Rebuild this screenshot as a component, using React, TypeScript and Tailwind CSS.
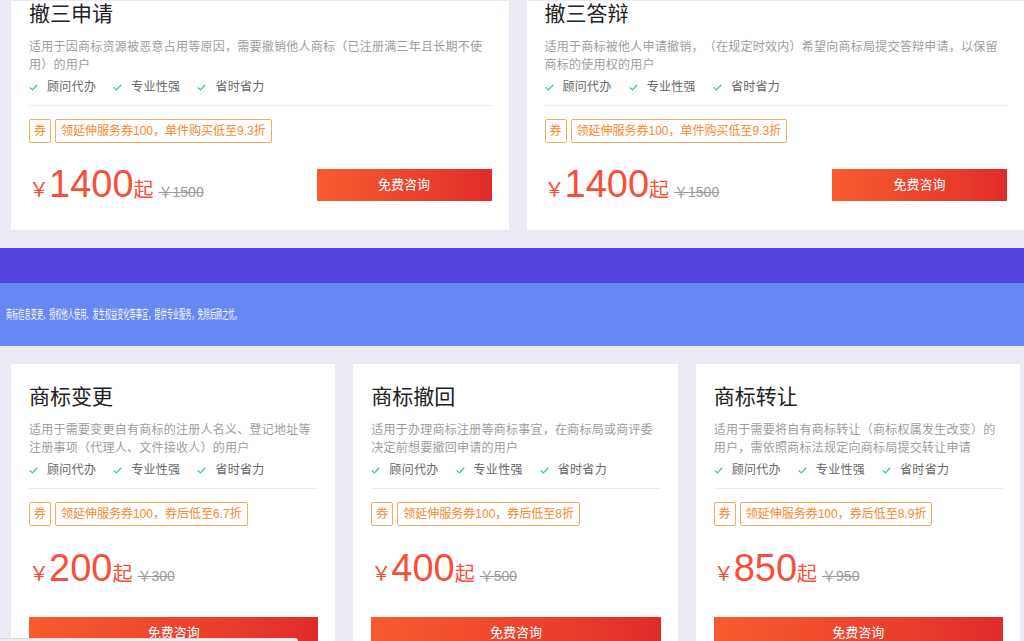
import React from "react";

type Plan = {
    title: string;
    desc: string;
    coupon: string;
    price: string;
    old: string;
};

const features = ["顾问代办", "专业性强", "省时省力"];

const topPlans: Plan[] = [
    {
        title: "撤三申请",
        desc: "适用于因商标资源被恶意占用等原因，需要撤销他人商标（已注册满三年且长期不使用）的用户",
        coupon: "领延伸服务券100，单件购买低至9.3折",
        price: "1400",
        old: "1500",
    },
    {
        title: "撤三答辩",
        desc: "适用于商标被他人申请撤销，（在规定时效内）希望向商标局提交答辩申请，以保留商标的使用权的用户",
        coupon: "领延伸服务券100，单件购买低至9.3折",
        price: "1400",
        old: "1500",
    },
];

const bottomPlans: Plan[] = [
    {
        title: "商标变更",
        desc: "适用于需要变更自有商标的注册人名义、登记地址等注册事项（代理人、文件接收人）的用户",
        coupon: "领延伸服务券100，券后低至6.7折",
        price: "200",
        old: "300",
    },
    {
        title: "商标撤回",
        desc: "适用于办理商标注册等商标事宜，在商标局或商评委决定前想要撤回申请的用户",
        coupon: "领延伸服务券100，券后低至8折",
        price: "400",
        old: "500",
    },
    {
        title: "商标转让",
        desc: "适用于需要将自有商标转让（商标权属发生改变）的用户，需依照商标法规定向商标局提交转让申请",
        coupon: "领延伸服务券100，券后低至8.9折",
        price: "850",
        old: "950",
    },
];

const Check = () => (
    <svg width="9" height="7" viewBox="0 0 9 7" fill="none">
        <path d="M0.8 3.4 L3.4 5.9 L8.2 0.8" stroke="#3ec78b" strokeWidth="1.3" />
    </svg>
);

const CardHead = ({ plan }: { plan: Plan }) => (
    <>
        <h3 className="text-[21px] leading-[26px] text-[#222]">{plan.title}</h3>
        <p className="mt-[11px] text-[12px] leading-[18px] tracking-[0.25px] text-[#9d9d9d]">{plan.desc}</p>
        <div className="mt-[4px] flex h-[18px] items-center gap-[17px] text-[12px] tracking-[0.3px] text-[#666]">
            {features.map((f) => (
                <span key={f} className="flex items-center gap-[9px]">
                    <Check />
                    {f}
                </span>
            ))}
        </div>
        <div className="mt-[9px] h-px bg-[#ececec]" />
        <div className="mt-[13px] flex gap-[4px] text-[12px] leading-[22px] text-[#f7882d]">
            <span className="rounded-[2px] border border-[#f9a95e] px-[4px]">券</span>
            <span className="rounded-[2px] border border-[#f9a95e] px-[5px]">{plan.coupon}</span>
        </div>
    </>
);

const Price = ({ plan }: { plan: Plan }) => (
    <div className="flex items-baseline text-[#f6503a]">
        <span className="text-[20px]">￥</span>
        <span className="text-[38px] leading-[38px]">{plan.price}</span>
        <span className="text-[20px]">起</span>
        <span className="ml-[5px] text-[14px] text-[#999] line-through">￥{plan.old}</span>
    </div>
);

const Button = ({ className }: { className: string }) => (
    <button className={"h-[32px] bg-gradient-to-r from-[#f85b2f] to-[#e02b2a] text-[13px] text-white " + className}>
        免费咨询
    </button>
);

export default function App() {
    return (
        <div className="relative h-[641px] w-[1024px] overflow-hidden bg-[#ebebf6] font-['Liberation_Sans','Noto_Sans_CJK_SC',sans-serif] [text-spacing-trim:space-all]">
            <div className="flex gap-[18px] pl-[11px] pt-[1px]">
                {topPlans.map((plan) => (
                    <div key={plan.title} className="flex-1 bg-white pb-[25px] pl-[18px] pr-[17px]">
                        <CardHead plan={plan} />
                        <div className="mt-[22px] flex items-center justify-between">
                            <Price plan={plan} />
                            <Button className="w-[175px]" />
                        </div>
                    </div>
                ))}
            </div>

            <div className="mt-[18px] h-[35px] bg-[#5443de]" />
            <div className="flex h-[63px] items-center bg-[#6688f2] pl-[6px]">
                <span className="inline-block origin-left scale-x-[0.515] whitespace-nowrap text-[12px] text-white">
                    商标信息变更、授权他人使用、发生权益变化等事宜，提供专业服务，免除后顾之忧。
                </span>
            </div>

            <div className="mt-[18px] grid grid-cols-3 gap-[18px] pl-[11px] pr-[4px]">
                {bottomPlans.map((plan) => (
                    <div key={plan.title} className="bg-white pb-[30px] pl-[18px] pr-[17px] pt-[20px]">
                        <CardHead plan={plan} />
                        <div className="mt-[23px]">
                            <Price plan={plan} />
                        </div>
                        <Button className="mt-[28px] w-full" />
                    </div>
                ))}
            </div>

            <div className="fixed bottom-0 left-0 h-[3px] w-[298px] rounded-tr-[3px] border-t border-[#d9d9d9] bg-[#ededed]" />
        </div>
    );
}
